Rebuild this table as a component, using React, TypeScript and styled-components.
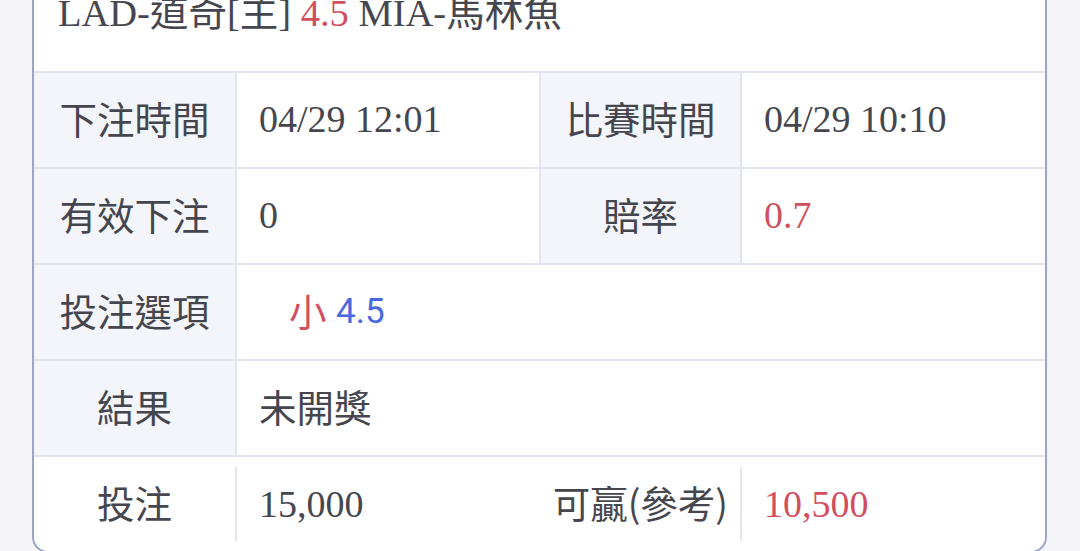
import styled, { createGlobalStyle } from 'styled-components';

const GlobalStyle = createGlobalStyle`
  html, body {
    margin: 0;
    padding: 0;
    background: #f5f5f7;
    overflow: hidden;
  }
  body {
    font-family: 'Liberation Serif', 'Noto Sans CJK TC', serif;
    color: #46464f;
  }
`;

const COLOR = {
  line: '#e2e5f0',
  labelBg: '#f4f5fa',
  border: '#9ea3cc',
  red: '#d14f5e',
  blue: '#4a68de',
};

const Page = styled.div`
  padding: 0 33px 0 32px;
  height: 551px;
  overflow: hidden;
`;

const Card = styled.div`
  margin-top: -30px;
  background: #fff;
  border: 2px solid ${COLOR.border};
  border-radius: 16px;
  overflow: hidden;
`;

const Header = styled.div`
  padding: 16px 24px 33px;
  font-size: 38.5px;
  line-height: 50px;
  white-space: nowrap;
  border-bottom: 2px solid ${COLOR.line};
`;

const Red = styled.span`
  color: ${COLOR.red};
`;

const Blue = styled.span`
  color: ${COLOR.blue};
  font-family: Roboto, 'Noto Sans', sans-serif;
  font-size: 35px;
`;

const Grid = styled.div`
  display: grid;
  grid-template-columns: 201px 302px 199px 1fr;
  grid-auto-rows: 94px;
  gap: 2px;
  background: ${COLOR.line};
  border-bottom: 2px solid ${COLOR.line};
`;

const LabelCell = styled.div`
  display: flex;
  align-items: center;
  justify-content: center;
  padding-bottom: 6px;
  background: ${COLOR.labelBg};
  font-family: 'Noto Sans CJK TC', sans-serif;
  font-size: 37.5px;
  color: #45454e;
`;

const ValueCell = styled.div<{ span?: boolean; indent?: number }>`
  display: flex;
  align-items: center;
  padding-left: ${(p) => 22 + (p.indent ?? 0)}px;
  padding-bottom: 2px;
  background: #fff;
  font-size: 38px;
  grid-column: ${(p) => (p.span ? '2 / -1' : 'auto')};
`;

const CjkText = styled.span`
  font-family: 'Noto Sans CJK TC', sans-serif;
  font-size: 37.5px;
  position: relative;
  top: -2px;
`;

const Footer = styled.div`
  display: grid;
  grid-template-columns: 201px 304px 201px 1fr;
  align-items: center;
  height: 94px;
`;

const FooterLabel = styled.div<{ align?: 'center' | 'right' }>`
  font-family: 'Noto Sans CJK TC', sans-serif;
  font-size: 37.5px;
  text-align: ${(p) => p.align ?? 'center'};
  padding-right: ${(p) => (p.align === 'right' ? '12px' : '0')};
  padding-bottom: 6px;
  white-space: nowrap;
`;

const FooterValue = styled.div<{ red?: boolean }>`
  display: flex;
  align-items: center;
  height: 74px;
  padding-left: 22px;
  font-size: 38px;
  color: ${(p) => (p.red ? COLOR.red : 'inherit')};
  border-left: 2px solid ${COLOR.line};
`;

export default function App() {
  return (
    <>
      <GlobalStyle />
      <Page>
        <Card>
          <Header>
            LAD-道奇[主] <Red>4.5</Red> MIA-馬林魚
          </Header>
          <Grid>
            <LabelCell>下注時間</LabelCell>
            <ValueCell>04/29 12:01</ValueCell>
            <LabelCell>比賽時間</LabelCell>
            <ValueCell>04/29 10:10</ValueCell>

            <LabelCell>有效下注</LabelCell>
            <ValueCell>0</ValueCell>
            <LabelCell>賠率</LabelCell>
            <ValueCell>
              <Red>0.7</Red>
            </ValueCell>

            <LabelCell>投注選項</LabelCell>
            <ValueCell span indent={30}>
              <CjkText>
                <Red>小</Red>
              </CjkText>
              &nbsp;<Blue>4.5</Blue>
            </ValueCell>

            <LabelCell>結果</LabelCell>
            <ValueCell span>
              <CjkText>未開獎</CjkText>
            </ValueCell>
          </Grid>
          <Footer>
            <FooterLabel>投注</FooterLabel>
            <FooterValue>15,000</FooterValue>
            <FooterLabel align="right">可贏(參考)</FooterLabel>
            <FooterValue red>10,500</FooterValue>
          </Footer>
        </Card>
      </Page>
    </>
  );
}
